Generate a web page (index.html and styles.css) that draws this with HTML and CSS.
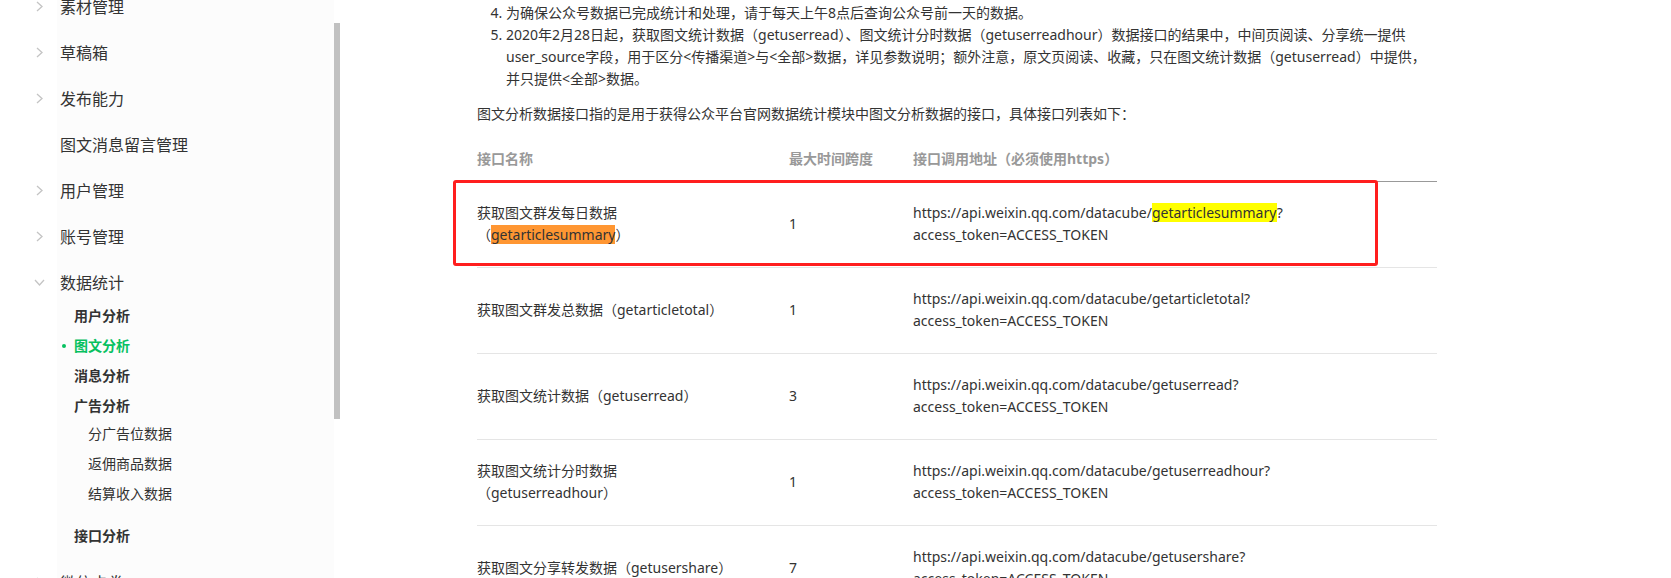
FILE: index.html
```html
<!DOCTYPE html>
<html lang="zh-CN">
<head>
  <meta charset="UTF-8" />
  <meta name="viewport" content="width=device-width, initial-scale=1.0">
  <title>图文分析 - 数据统计</title>
  <link rel="stylesheet" href="styles.css">
</head>
<body>
  <div class="page">
    <nav class="side">
      <ul class="menu">
        <li class="menu-item"><span class="arrow"><svg width="7" height="11" viewBox="0 0 7 11"><polyline points="1,1 6,5.5 1,10" fill="none" stroke="#c4c4c4" stroke-width="1.3"/></svg></span>素材管理</li>
        <li class="menu-item"><span class="arrow"><svg width="7" height="11" viewBox="0 0 7 11"><polyline points="1,1 6,5.5 1,10" fill="none" stroke="#c4c4c4" stroke-width="1.3"/></svg></span>草稿箱</li>
        <li class="menu-item"><span class="arrow"><svg width="7" height="11" viewBox="0 0 7 11"><polyline points="1,1 6,5.5 1,10" fill="none" stroke="#c4c4c4" stroke-width="1.3"/></svg></span>发布能力</li>
        <li class="menu-item"><span class="arrow"></span>图文消息留言管理</li>
        <li class="menu-item"><span class="arrow"><svg width="7" height="11" viewBox="0 0 7 11"><polyline points="1,1 6,5.5 1,10" fill="none" stroke="#c4c4c4" stroke-width="1.3"/></svg></span>用户管理</li>
        <li class="menu-item"><span class="arrow"><svg width="7" height="11" viewBox="0 0 7 11"><polyline points="1,1 6,5.5 1,10" fill="none" stroke="#c4c4c4" stroke-width="1.3"/></svg></span>账号管理</li>
        <li class="menu-item open"><span class="arrow"><svg width="11" height="7" viewBox="0 0 11 7"><polyline points="1,1 5.5,6 10,1" fill="none" stroke="#c4c4c4" stroke-width="1.3"/></svg></span>数据统计</li>
        <li>
          <ul class="sub">
            <li class="sub-item">用户分析</li>
            <li class="sub-item active">图文分析</li>
            <li class="sub-item">消息分析</li>
            <li class="sub-item">广告分析</li>
            <li>
              <ul class="third">
                <li>分广告位数据</li>
                <li>返佣商品数据</li>
                <li>结算收入数据</li>
              </ul>
            </li>
            <li class="sub-item last">接口分析</li>
          </ul>
        </li>
        <li class="menu-item"><span class="arrow"><svg width="7" height="11" viewBox="0 0 7 11"><polyline points="1,1 6,5.5 1,10" fill="none" stroke="#c4c4c4" stroke-width="1.3"/></svg></span>微信卡券</li>
      </ul>
      <div class="scroll-thumb"></div>
    </nav>

    <main class="content">
      <ol class="notes" start="4">
        <li>为确保公众号数据已完成统计和处理，请于每天上午8点后查询公众号前一天的数据。</li>
        <li>2020年2月28日起，获取图文统计数据（getuserread）、图文统计分时数据（getuserreadhour）数据接口的结果中，中间页阅读、分享统一提供user_source字段，用于区分&lt;传播渠道&gt;与&lt;全部&gt;数据，详见参数说明；额外注意，原文页阅读、收藏，只在图文统计数据（getuserread）中提供，并只提供&lt;全部&gt;数据。</li>
      </ol>
      <p class="intro">图文分析数据接口指的是用于获得公众平台官网数据统计模块中图文分析数据的接口，具体接口列表如下：</p>

      <div class="table-wrap">
        <table class="api-table">
          <thead>
            <tr>
              <th class="col-name">接口名称</th>
              <th class="col-span">最大时间跨度</th>
              <th class="col-url">接口调用地址（必须使用https）</th>
            </tr>
          </thead>
          <tbody>
            <tr>
              <td class="col-name">获取图文群发每日数据（<mark class="hit-current">getarticlesummary</mark>）</td>
              <td class="col-span">1</td>
              <td class="col-url">https://api.weixin.qq.com/datacube/<mark class="hit">getarticlesummary</mark>?<br>access_token=ACCESS_TOKEN</td>
            </tr>
            <tr>
              <td class="col-name">获取图文群发总数据（getarticletotal）</td>
              <td class="col-span">1</td>
              <td class="col-url">https://api.weixin.qq.com/datacube/getarticletotal?<br>access_token=ACCESS_TOKEN</td>
            </tr>
            <tr>
              <td class="col-name">获取图文统计数据（getuserread）</td>
              <td class="col-span">3</td>
              <td class="col-url">https://api.weixin.qq.com/datacube/getuserread?<br>access_token=ACCESS_TOKEN</td>
            </tr>
            <tr>
              <td class="col-name">获取图文统计分时数据（getuserreadhour）</td>
              <td class="col-span">1</td>
              <td class="col-url">https://api.weixin.qq.com/datacube/getuserreadhour?<br>access_token=ACCESS_TOKEN</td>
            </tr>
            <tr>
              <td class="col-name">获取图文分享转发数据（getusershare）</td>
              <td class="col-span">7</td>
              <td class="col-url">https://api.weixin.qq.com/datacube/getusershare?<br>access_token=ACCESS_TOKEN</td>
            </tr>
          </tbody>
        </table>
        <div class="focus-box"></div>
      </div>
    </main>
  </div>
</body>
</html>
```

FILE: styles.css
```css
body {
  margin: 0;
  font-family: "Noto Sans", "Noto Sans CJK SC", sans-serif;
  color: #333;
  background: #fff;
  overflow: hidden;
}
ul, ol {
  margin: 0;
  padding: 0;
  list-style: none;
}
.page {
  display: flex;
  height: 578px;
}
.side {
  position: relative;
  width: 340px;
  flex-shrink: 0;
  background: linear-gradient(to right, #fff 57px, #fcfcfc 57px, #fcfcfc 334px, #fff 334px);
}
.menu {
  margin-top: -17px;
}
.menu-item {
  display: flex;
  align-items: center;
  height: 46px;
  font-size: 16px;
}
.arrow {
  width: 20px;
  margin-left: 36px;
  margin-right: 4px;
  display: flex;
  align-items: center;
}
.open .arrow {
  margin-left: 34px;
  margin-right: 6px;
}
.sub {
  margin-top: -4px;
  margin-bottom: 8px;
}
.sub-item {
  position: relative;
  height: 30px;
  line-height: 30px;
  padding-left: 74px;
  font-size: 14px;
  font-weight: bold;
}
.sub-item.active {
  color: #07c160;
}
.sub-item.active::before {
  content: "";
  position: absolute;
  left: 62px;
  top: 13px;
  width: 4px;
  height: 4px;
  border-radius: 50%;
  background: #07c160;
}
.sub-item.last {
  margin-top: 12px;
}
.third {
  margin-top: -2px;
}
.third li {
  height: 30px;
  line-height: 30px;
  padding-left: 88px;
  font-size: 14px;
}
.scroll-thumb {
  position: absolute;
  left: 334px;
  top: 23px;
  width: 6px;
  height: 396px;
  background: #c1c1c1;
}
.content {
  flex: 1;
  padding-left: 137px;
  font-size: 14px;
  line-height: 22px;
}
.notes {
  list-style: decimal;
  padding-left: 29px;
  margin-top: 2px;
  width: 925px;
}
.intro {
  margin: 13px 0 0;
}
.table-wrap {
  position: relative;
  width: 960px;
  margin-top: 11px;
}
.api-table {
  width: 960px;
  border-collapse: collapse;
  table-layout: fixed;
}
.api-table th {
  text-align: left;
  font-weight: bold;
  color: #999;
  padding: 12px 0 11px;
  border-bottom: 1px solid #999;
}
.api-table td {
  padding: 20px 0 21px;
  vertical-align: middle;
  border-bottom: 1px solid #e5e5e5;
}
.col-name {
  width: 312px;
  padding-right: 40px !important;
  box-sizing: border-box;
}
.col-span {
  width: 124px;
}
mark {
  color: inherit;
}
.hit-current {
  background: #ff9632;
}
.hit {
  background: #ffff00;
}
.focus-box {
  position: absolute;
  left: -24px;
  top: 44px;
  width: 919px;
  height: 80px;
  border: 3px solid #ff1e1e;
  border-radius: 3px;
}
```
